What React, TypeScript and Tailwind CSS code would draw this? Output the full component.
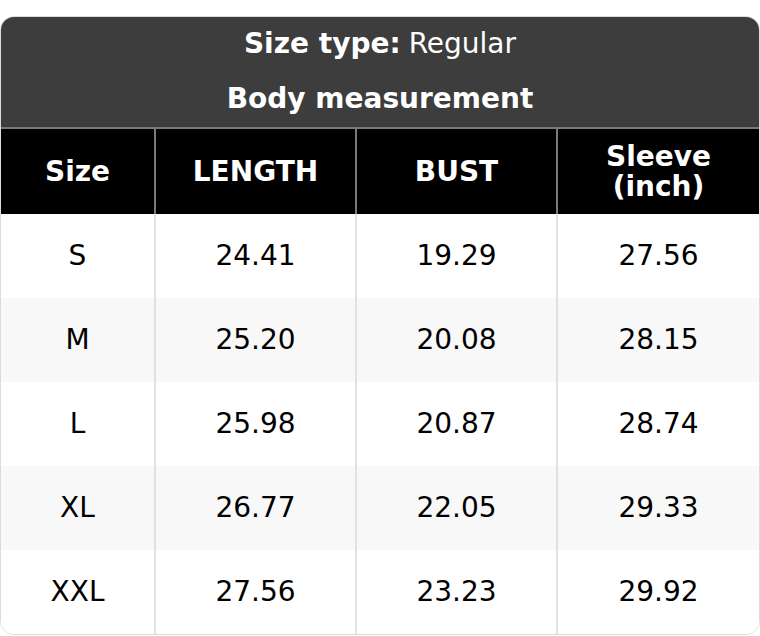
const rows = [
  { size: 'S', length: '24.41', bust: '19.29', sleeve: '27.56' },
  { size: 'M', length: '25.20', bust: '20.08', sleeve: '28.15' },
  { size: 'L', length: '25.98', bust: '20.87', sleeve: '28.74' },
  { size: 'XL', length: '26.77', bust: '22.05', sleeve: '29.33' },
  { size: 'XXL', length: '27.56', bust: '23.23', sleeve: '29.92' },
];

export default function App() {
  return (
    <div className="w-[760px] pt-4 bg-white font-['DejaVu_Sans',sans-serif] text-[28px]">
      <div className="rounded-[14px] border border-[#dcdcdc] overflow-hidden">
        {/* Title */}
        <div className="bg-[#3d3d3d] text-white text-center">
          <div className="h-[54px] flex items-center justify-center">
            <span className="font-bold">Size type:</span>
            <span className="ml-2">Regular</span>
          </div>
          <div className="h-[56px] flex items-center justify-center font-bold">Body measurement</div>
        </div>

        {/* Header */}
        <div className="grid grid-cols-[153px_201px_201px_1fr] bg-black text-white font-bold text-center border-t-2 border-[#7a7a7a] h-[87px] leading-[30px]">
          <div className="flex items-center justify-center">Size</div>
          <div className="flex items-center justify-center border-l-2 border-[#7a7a7a]">LENGTH</div>
          <div className="flex items-center justify-center border-l-2 border-[#7a7a7a]">BUST</div>
          <div className="flex items-center justify-center border-l-2 border-[#7a7a7a]">
            Sleeve
            <br />
            (inch)
          </div>
        </div>

        {/* Rows */}
        {rows.map((r, i) => (
          <div
            key={r.size}
            className={`grid grid-cols-[153px_201px_201px_1fr] h-[84px] text-center text-black ${
              i % 2 === 1 ? 'bg-[#f8f8f8]' : 'bg-white'
            }`}
          >
            <div className="flex items-center justify-center">{r.size}</div>
            <div className="flex items-center justify-center border-l-2 border-[#e2e2e2]">{r.length}</div>
            <div className="flex items-center justify-center border-l-2 border-[#e2e2e2]">{r.bust}</div>
            <div className="flex items-center justify-center border-l-2 border-[#e2e2e2]">{r.sleeve}</div>
          </div>
        ))}
      </div>
    </div>
  );
}
